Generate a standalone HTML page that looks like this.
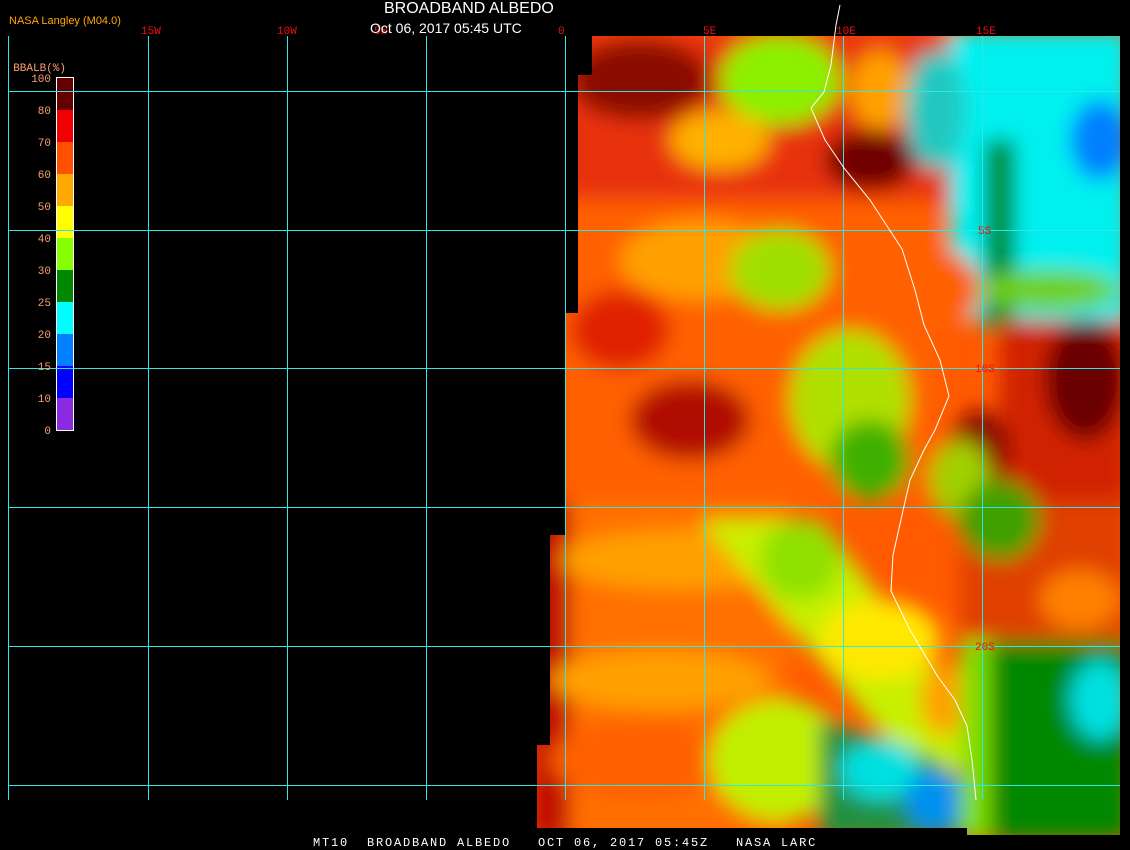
<!DOCTYPE html>
<html><head><meta charset="utf-8"><style>
html,body{margin:0;padding:0;background:#000;width:1130px;height:850px;overflow:hidden;font-family:"Liberation Sans",sans-serif}
.t{position:absolute;white-space:pre}
</style></head><body>
<svg width="1130" height="850" style="position:absolute;left:0;top:0">
<defs>
<filter id="b" x="-20%" y="-20%" width="140%" height="140%"><feGaussianBlur stdDeviation="10"/></filter>
<clipPath id="c"><path d="M592 36H1120V835H967V828H537V745H550V535H565V313H578V75H592Z"/></clipPath>
</defs>
<g clip-path="url(#c)">
<rect x="530" y="30" width="600" height="810" fill="#ff5a00"/>
<g filter="url(#b)">
<rect x="540" y="30" width="420" height="180" fill="#e83010"/>
<ellipse cx="640" cy="80" rx="70" ry="40" fill="#8a0a00"/>
<ellipse cx="780" cy="80" rx="60" ry="45" fill="#8cf000"/>
<ellipse cx="720" cy="140" rx="50" ry="30" fill="#ffb000"/>
<ellipse cx="870" cy="160" rx="45" ry="30" fill="#700000"/>
<ellipse cx="880" cy="90" rx="30" ry="40" fill="#ffa000"/>
<rect x="950" y="30" width="180" height="290" fill="#00f0f0"/>
<ellipse cx="935" cy="110" rx="30" ry="60" fill="#20c8c0"/>
<ellipse cx="1100" cy="140" rx="30" ry="40" fill="#0080ff"/>
<rect x="985" y="140" width="30" height="190" fill="#008a00"/>
<ellipse cx="1050" cy="290" rx="70" ry="20" fill="#70d000"/>
<rect x="1000" y="320" width="130" height="180" fill="#d02000"/>
<ellipse cx="1085" cy="380" rx="40" ry="60" fill="#6a0000"/>
<ellipse cx="980" cy="450" rx="30" ry="40" fill="#8a1000"/>
<rect x="560" y="200" width="380" height="300" fill="#ff6000"/>
<ellipse cx="700" cy="260" rx="80" ry="40" fill="#ffa000"/>
<ellipse cx="780" cy="270" rx="50" ry="40" fill="#a0e000"/>
<ellipse cx="850" cy="400" rx="60" ry="70" fill="#b0e000"/>
<ellipse cx="870" cy="460" rx="40" ry="40" fill="#40b000"/>
<ellipse cx="690" cy="420" rx="60" ry="40" fill="#b01000"/>
<ellipse cx="620" cy="330" rx="50" ry="40" fill="#e02000"/>
<ellipse cx="940" cy="290" rx="40" ry="40" fill="#ff6000"/>
<ellipse cx="960" cy="480" rx="30" ry="40" fill="#a0d000"/>
<rect x="530" y="500" width="260" height="340" fill="#ff7000"/>
<rect x="530" y="500" width="40" height="340" fill="#c01000"/>
<ellipse cx="680" cy="560" rx="120" ry="30" fill="#ffa000"/>
<ellipse cx="660" cy="680" rx="110" ry="30" fill="#ffa000"/>
<ellipse cx="640" cy="760" rx="90" ry="40" fill="#ff6000"/>
<path d="M700 520 L820 520 L990 740 L930 790 Z" fill="#c8f000"/>
<ellipse cx="880" cy="640" rx="60" ry="40" fill="#ffe800"/>
<ellipse cx="945" cy="700" rx="25" ry="35" fill="#ffa000"/>
<ellipse cx="800" cy="560" rx="40" ry="40" fill="#90e000"/>
<ellipse cx="780" cy="760" rx="70" ry="60" fill="#c0f000"/>
<path d="M820 720 L940 760 L975 840 L820 840 Z" fill="#209040"/>
<ellipse cx="880" cy="770" rx="40" ry="30" fill="#00e0e0"/>
<ellipse cx="935" cy="800" rx="30" ry="30" fill="#0090f0"/>
<rect x="960" y="500" width="170" height="140" fill="#e04000"/>
<ellipse cx="1000" cy="520" rx="40" ry="40" fill="#40a000"/>
<ellipse cx="1080" cy="600" rx="40" ry="30" fill="#ff8000"/>
<rect x="980" y="640" width="150" height="200" fill="#008800"/>
<ellipse cx="1100" cy="700" rx="30" ry="40" fill="#00e0e0"/>
<rect x="960" y="640" width="30" height="200" fill="#80e000"/>
</g>
</g>
<g stroke="#2ee8e8" stroke-width="1" shape-rendering="crispEdges">
<line x1="8.5" y1="36" x2="8.5" y2="800"/><line x1="148.5" y1="36" x2="148.5" y2="800"/>
<line x1="287.5" y1="36" x2="287.5" y2="800"/><line x1="426.5" y1="36" x2="426.5" y2="800"/>
<line x1="565.5" y1="36" x2="565.5" y2="800"/><line x1="704.5" y1="36" x2="704.5" y2="800"/>
<line x1="843.5" y1="36" x2="843.5" y2="800"/><line x1="982.5" y1="36" x2="982.5" y2="800"/>
<line x1="8" y1="91.5" x2="1120" y2="91.5"/><line x1="8" y1="230.5" x2="1120" y2="230.5"/>
<line x1="8" y1="368.5" x2="1120" y2="368.5"/><line x1="8" y1="507.5" x2="1120" y2="507.5"/>
<line x1="8" y1="646.5" x2="1120" y2="646.5"/><line x1="8" y1="785.5" x2="1120" y2="785.5"/>
</g>
<polyline fill="none" stroke="#fff" stroke-width="1" points="840,5 836,25 831,65 824,92 811,108 825,140 844,168 870,200 902,249 915,290 924,325 940,360 949,396 935,430 924,450 910,480 902,515 893,555 891,591 910,630 938,677 955,700 967,726 972,760 976,800"/>
<g shape-rendering="crispEdges">
<rect x="57" y="78" width="16" height="32" fill="#640000"/>
<rect x="57" y="110" width="16" height="32" fill="#f00000"/>
<rect x="57" y="142" width="16" height="32" fill="#ff5000"/>
<rect x="57" y="174" width="16" height="32" fill="#ffa800"/>
<rect x="57" y="206" width="16" height="32" fill="#ffff00"/>
<rect x="57" y="238" width="16" height="32" fill="#88ff00"/>
<rect x="57" y="270" width="16" height="32" fill="#008800"/>
<rect x="57" y="302" width="16" height="32" fill="#00ffff"/>
<rect x="57" y="334" width="16" height="32" fill="#0080ff"/>
<rect x="57" y="366" width="16" height="32" fill="#0000ff"/>
<rect x="57" y="398" width="16" height="32" fill="#8a2be2"/>
<rect x="56.5" y="77.5" width="17" height="353" fill="none" stroke="#fff"/>
<line x1="8" y1="91.5" x2="120" y2="91.5" stroke="#2ee8e8"/>
<line x1="8" y1="230.5" x2="120" y2="230.5" stroke="#2ee8e8"/>
<line x1="8" y1="368.5" x2="120" y2="368.5" stroke="#2ee8e8"/>
</g>
<g font-family="Liberation Mono,monospace" font-size="11" fill="#ffa070" text-anchor="end">
<text x="51" y="82">100</text><text x="51" y="114">80</text><text x="51" y="146">70</text><text x="51" y="178">60</text><text x="51" y="210">50</text><text x="51" y="242">40</text><text x="51" y="274">30</text><text x="51" y="306">25</text><text x="51" y="338">20</text><text x="51" y="370">15</text><text x="51" y="402">10</text><text x="51" y="434">0</text>
<text x="66" y="71">BBALB(%)</text>
</g>
<g font-family="Liberation Mono,monospace" font-size="11" fill="#f01010">
<text x="141" y="34">15W</text><text x="277" y="34">10W</text><text x="374" y="34">5W</text><text x="558" y="34">0</text>
<text x="703" y="34">5E</text><text x="836" y="34">10E</text><text x="976" y="34">15E</text>
<text x="978" y="234">5S</text><text x="975" y="372">10S</text><text x="975" y="650">20S</text>
</g>
</svg>
<div class="t" style="left:9px;top:15px;font-size:11px;color:#ffa800">NASA Langley (M04.0)</div>
<div class="t" style="left:384px;top:0px;font-size:16px;color:#fff">BROADBAND ALBEDO</div>
<div class="t" style="left:370px;top:20px;font-size:14px;color:#fff">Oct 06, 2017 05:45 UTC</div>
<div class="t" style="left:313px;top:836px;font-size:12px;color:#fff;font-family:'Liberation Mono',monospace;letter-spacing:1.8px">MT10  BROADBAND ALBEDO   OCT 06, 2017 05:45Z   NASA LARC</div>
</body></html>
